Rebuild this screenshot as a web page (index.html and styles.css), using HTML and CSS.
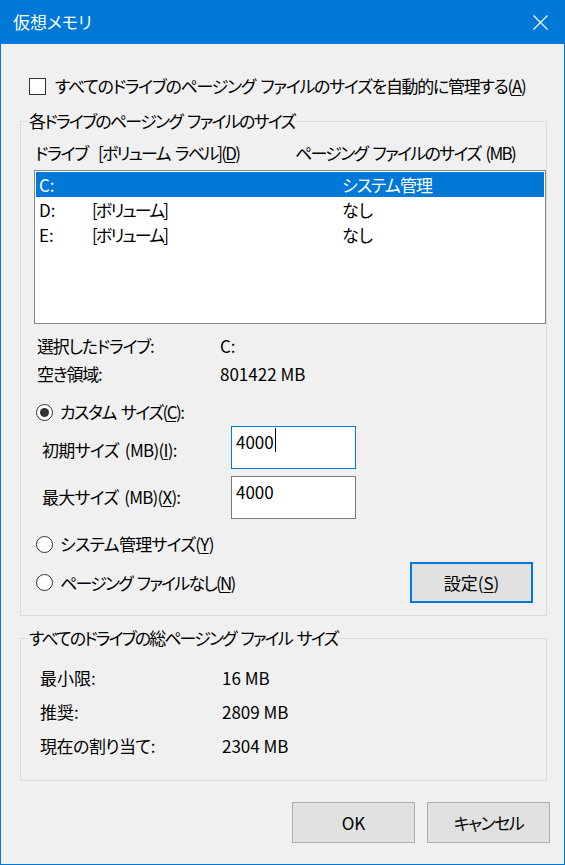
FILE: index.html
```html
<!DOCTYPE html>
<html lang="ja">
<head>
<meta charset="utf-8">
<title>仮想メモリ</title>
<link rel="stylesheet" href="styles.css">
</head>
<body>
<div class="window">
  <div class="titlebar">
    <span class="title">仮想メモリ</span>
    <svg class="close" width="15" height="15" viewBox="0 0 15 15" aria-label="閉じる">
      <path d="M0.5 0.5 L14.5 14.5 M14.5 0.5 L0.5 14.5" stroke="#ffffff" stroke-width="1.2" fill="none"/>
    </svg>
  </div>
  <div class="client">
    <div class="auto-row">
      <span class="checkbox"></span>
      <span class="t-auto">すべてのドライブのページング ファイルのサイズを自動的に管理する(<u>A</u>)</span>
    </div>

    <fieldset class="group group-drives">
      <legend class="t-legend1">各ドライブのページング ファイルのサイズ</legend>
      <div class="list-header">
        <span class="t-hdrive">ドライブ</span>
        <span class="t-hlabel">[ボリューム ラベル](<u>D</u>)</span>
        <span class="t-hsize">ページング ファイルのサイズ (MB)</span>
      </div>
      <div class="listbox">
        <div class="lrow selected"><span>C:</span><span></span><span class="t-sys">システム管理</span></div>
        <div class="lrow"><span>D:</span><span class="t-vol">[ボリューム]</span><span>なし</span></div>
        <div class="lrow"><span>E:</span><span class="t-vol">[ボリューム]</span><span>なし</span></div>
      </div>
      <div class="info">
        <div class="info-row"><span class="t-info">選択したドライブ:</span><span>C:</span></div>
        <div class="info-row"><span class="t-info">空き領域:</span><span>801422 MB</span></div>
      </div>
      <div class="radio-row custom">
        <span class="radio checked"></span>
        <span class="t-custom">カスタム サイズ(<u>C</u>):</span>
      </div>
      <div class="field field-init">
        <span class="flabel">初期サイズ (MB)(<u>I</u>):</span>
        <div class="textbox focused">4000<span class="caret"></span></div>
      </div>
      <div class="field field-max">
        <span class="flabel">最大サイズ (MB)(<u>X</u>):</span>
        <div class="textbox">4000</div>
      </div>
      <div class="radio-row sys">
        <span class="radio"></span>
        <span class="t-sysradio">システム管理サイズ(<u>Y</u>)</span>
      </div>
      <div class="radio-row none">
        <span class="radio"></span>
        <span class="none-label t-none">ページング ファイルなし(<u>N</u>)</span>
        <button class="btn default">設定(<u>S</u>)</button>
      </div>
    </fieldset>

    <fieldset class="group group-total">
      <legend class="t-legend2">すべてのドライブの総ページング ファイル サイズ</legend>
      <div class="total-row"><span>最小限:</span><span>16 MB</span></div>
      <div class="total-row"><span>推奨:</span><span>2809 MB</span></div>
      <div class="total-row"><span class="t-current">現在の割り当て:</span><span>2304 MB</span></div>
    </fieldset>

    <div class="buttons">
      <button class="btn">OK</button>
      <button class="btn t-cancel">キャンセル</button>
    </div>
  </div>
</div>
</body>
</html>
```

FILE: styles.css
```css
* {
  box-sizing: border-box;
}

html, body {
  margin: 0;
  padding: 0;
  background: #f0f0f0;
}

body {
  font-family: "Noto Sans CJK JP", "Noto Sans", sans-serif;
  font-size: 17px;
  line-height: 22px;
  color: #000;
  font-feature-settings: "palt" 1;
}

u {
  text-decoration: underline;
  text-underline-offset: 2px;
  text-decoration-thickness: 1px;
}

.window {
  width: 565px;
  height: 865px;
  border: 1px solid #0078d7;
  border-top: 0;
  background: #f0f0f0;
  display: flex;
  flex-direction: column;
}

.titlebar {
  height: 44px;
  flex: none;
  background: #0078d7;
  color: #fff;
  display: flex;
  align-items: center;
  justify-content: space-between;
  margin: 0 -1px;
  padding: 0 17px 0 13px;
}

.title {
  font-size: 17px;
  line-height: 22px;
}

.close {
  display: block;
}

.client {
  padding: 0 17px 0 19px;
  display: flex;
  flex-direction: column;
}

/* text width tuning (Yu Gothic UI kana are narrower) */
.t-auto { letter-spacing: -1.3px; word-spacing: 3px; white-space: nowrap; }
.t-legend1 { letter-spacing: -1.75px; word-spacing: 3px; }
.t-legend2 { letter-spacing: -1.9px; word-spacing: 3px; }
.t-hdrive { letter-spacing: -1.3px; }
.t-hlabel { letter-spacing: -1.8px; word-spacing: 3px; }
.t-hsize { letter-spacing: -1.7px; word-spacing: 3px; }
.t-vol { letter-spacing: -1.9px; }
.t-sys { letter-spacing: -1px; }
.t-info { letter-spacing: -1.2px; }
.t-custom { letter-spacing: -1.55px; word-spacing: 3px; }
.flabel { letter-spacing: -0.7px; word-spacing: 3px; }
.field-max .flabel { letter-spacing: -0.8px; }
.t-sysradio { letter-spacing: -0.75px; }
.t-none { letter-spacing: -1.8px; word-spacing: 3px; }
.t-current { letter-spacing: -0.5px; }

/* checkbox row */
.auto-row {
  margin-top: 30px;
  height: 24px;
  display: flex;
  align-items: center;
  padding-left: 9px;
}

.checkbox {
  width: 17px;
  height: 17px;
  border: 1px solid #333;
  background: #fff;
  margin-right: 9px;
  flex: none;
}

/* group boxes */
.group {
  margin: 0;
  min-width: 0;
  border: 1px solid #dcdcdc;
  padding: 0;
}

.group legend {
  margin-left: 7px;
  padding: 0 1px;
  line-height: 22px;
  height: 22px;
}

.group-drives {
  margin-top: 12px;
  padding-top: 10px;
  padding-bottom: 12px;
}

.list-header {
  height: 22px;
  display: grid;
  grid-template-columns: 63px 197px auto;
  padding-left: 14px;
  white-space: nowrap;
}

.listbox {
  margin: 6px 0 0 13px;
  width: 512px;
  height: 154px;
  border: 1px solid #828790;
  background: #fff;
  padding: 1px;
}

.lrow {
  height: 25px;
  line-height: 25px;
  display: grid;
  grid-template-columns: 53px 250px auto;
  padding-left: 3px;
  white-space: nowrap;
}

.lrow.selected {
  background: #0078d7;
  color: #fff;
}

.info {
  margin-top: 8px;
}

.info-row {
  height: 28px;
  line-height: 28px;
  display: grid;
  grid-template-columns: 183px auto;
  padding-left: 16px;
}

.radio-row {
  display: flex;
  align-items: center;
  padding-left: 15px;
}

.radio {
  width: 17px;
  height: 17px;
  border: 1px solid #333;
  border-radius: 50%;
  background: #fff;
  margin-right: 7px;
  flex: none;
  display: flex;
  align-items: center;
  justify-content: center;
}

.radio.checked::after {
  content: "";
  width: 9px;
  height: 9px;
  border-radius: 50%;
  background: #333;
}

.radio-row.custom {
  margin-top: 11px;
  height: 26px;
}

.field {
  display: grid;
  grid-template-columns: 189px 125px;
  align-items: start;
  padding-left: 21px;
}

.field-init {
  margin-top: 1px;
}

.field-init .flabel {
  padding-top: 13px;
}

.field-max {
  margin-top: 7px;
}

.field-max .flabel {
  padding-top: 10px;
}

.textbox {
  width: 125px;
  height: 43px;
  border: 1px solid #7a7a7a;
  background: #fff;
  padding: 4px 0 0 4px;
  white-space: nowrap;
}

.textbox.focused {
  border-color: #0078d7;
}

.caret {
  display: inline-block;
  width: 1px;
  height: 24px;
  background: #000;
  vertical-align: top;
  margin-top: -3px;
  margin-left: 1px;
}

.radio-row.sys {
  margin-top: 11px;
  height: 28px;
}

.radio-row.none {
  margin-top: 4px;
  height: 41px;
}

.none-label {
  flex: 1;
}

.btn {
  font: inherit;
  color: #000;
  width: 123px;
  height: 41px;
  border: 1px solid #adadad;
  background: #e1e1e1;
  padding: 0;
  margin: 0;
  line-height: 22px;
  font-feature-settings: "palt" 1;
}

.btn.default {
  border: 2px solid #0078d7;
  margin-right: 13px;
}

.btn.t-cancel {
  letter-spacing: -1.5px;
}

.group-total {
  margin-top: 11px;
  padding-top: 12px;
  padding-bottom: 17px;
}

.total-row {
  height: 34px;
  line-height: 34px;
  display: grid;
  grid-template-columns: 182px auto;
  padding-left: 19px;
}

.buttons {
  margin-top: 21px;
  margin-right: -3px;
  display: flex;
  justify-content: flex-end;
  gap: 12px;
}
```
